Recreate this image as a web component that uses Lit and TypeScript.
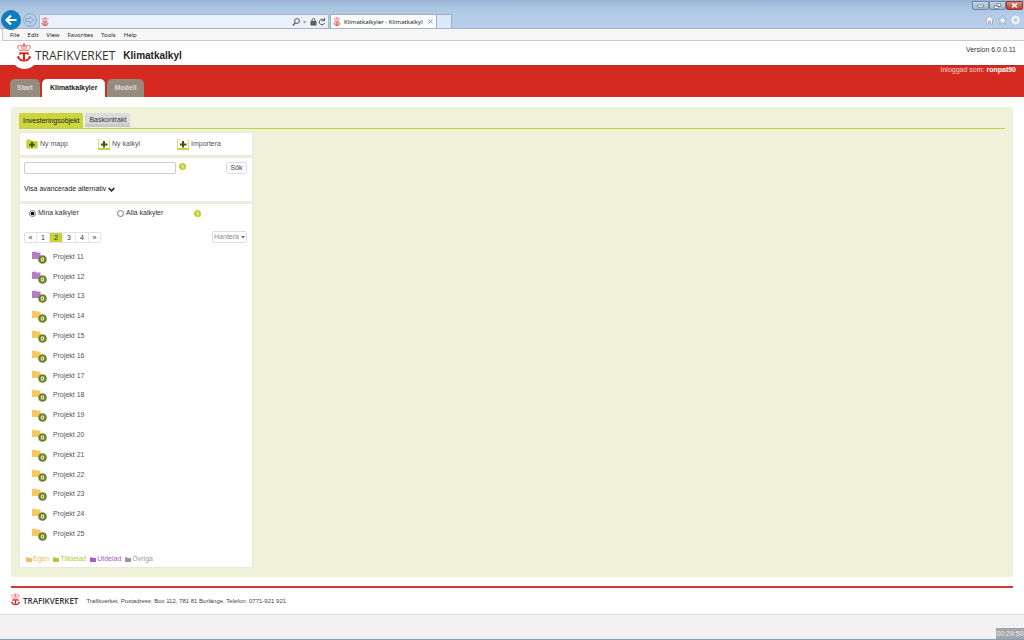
import { LitElement, html, css, svg } from "lit";
import { customElement, property, state } from "lit/decorators.js";
import { classMap } from "lit/directives/class-map.js";

const crest = html`<svg class="crest" viewBox="0 0 30 40" aria-hidden="true">
  <g fill="none" stroke="#e0564f" stroke-width="2">
    <circle cx="15" cy="2.8" r="1.8" />
    <path d="M15 4V13M5 14C-2 7 4 2 9 6C10.500 8 10.500 11 10.500 13M25 14C32 7 26 2 21 6C19.500 8 19.500 11 19.500 13M10 6C11 3.500 14 4.500 15 7C16 4.500 19 3.500 20 6" />
    <path d="M5 16Q15 13 25 16" />
  </g>
  <path fill="#d9291f" d="M5 19.500H25V25.500H22.500V23.500H17.300V36H12.700V23.500H7.500V25.500H5Z" />
  <path fill="none" stroke="#d9291f" stroke-width="4" d="M2.500 29C4 34.500 8 37.500 15 37.500S26 34.500 27.500 29" />
  <path fill="#d9291f" d="M0 31L2 26.500L7 30.500ZM30 31L28 26.500L23 30.500Z" />
</svg>`;

const folder = svg`<path d="M0 1.500Q0 .5 1 .5H4.500L5.500 2H11Q12 2 12 3V9Q12 10 11 10H1Q0 10 0 9Z" />`;

@customElement("folder-row")
export class FolderRow extends LitElement {
  @property() name = "";
  @property() kind = "own";

  static styles = css`
    :host { display: block; }
    a { display: flex; align-items: center; gap: 6px; color: #555; text-decoration: none; }
    .icon { width: 15px; height: 14px; display: block; }
    .own { fill: #f6c860; }
    .shared { fill: #b57cc8; }
    .badge { fill: #6e7f2c; }
    .zero { fill: none; stroke: #dfe5a8; stroke-width: 1.3; }
  `;

  render() {
    return html`<a href="#">
      <svg class="icon" viewBox="0 0 15 14" aria-hidden="true">
        <path class=${this.kind} d="M0 2L3.500 1.500L4.500 2.500L8.500 2.500V9H0Z" />
        <circle class="badge" cx="10.500" cy="9.500" r="4.300" />
        <ellipse class="zero" cx="10.500" cy="9.500" rx="1.200" ry="1.700" />
      </svg>
      <span>${this.name}</span>
    </a>`;
  }
}

@customElement("app-root")
export class AppRoot extends LitElement {
  @state() private page = "2";
  @state() private scope = "mina";

  static styles = css`
    :host {
      display: flex; flex-direction: column; min-height: 100vh; box-sizing: border-box;
      font: 7px/10px "Liberation Sans", Arial, sans-serif; color: #333; background: #fff;
    }
    * { box-sizing: border-box; }
    svg { display: block; flex: none; }
    button, input { font: inherit; margin: 0; }
    button { cursor: pointer; padding: 0; }
    a { text-decoration: none; color: inherit; }
    ul { list-style: none; margin: 0; padding: 0; }

    .chrome {
      position: relative; display: flex; align-items: flex-end; height: 29px; padding-left: 1px;
      background: linear-gradient(#98b4d5, #a9c3e1 25%, #b5cde9 60%, #b7cfe9);
      font-family: "Noto Sans", sans-serif; font-size: 6px; border-bottom: 1px solid #a3b3c5;
    }
    .nav { background: none; border: 0; }
    .back { width: 20px; height: 20px; margin-bottom: -2px; }
    .forward { width: 14px; height: 14px; margin: 0 2px 1px; }
    .address {
      display: flex; align-items: center; width: 290px; height: 14px; padding: 0 2px 0 1px; gap: 3px;
      background: #e9f1fa; border: 1px solid #a6b9cf; border-bottom: 0;
    }
    .address input { flex: 1; min-width: 0; border: 0; background: none; outline: 0; }
    .crest { width: 8px; height: 9px; }
    .browser-tab {
      display: flex; align-items: center; gap: 3px; height: 14px; width: 107px; margin-left: 1px;
      padding: 0 3px 0 2px; background: #fcfdff; border: 1px solid #9bacc2; border-bottom: 0; color: #222;
    }
    .browser-tab span { flex: 1; white-space: nowrap; }
    .new-tab { width: 15px; height: 14px; background: #dce9f8; border: 1px solid #9bacc2; border-width: 1px 1px 0 0; }
    .window { position: absolute; top: 1px; right: 1px; display: flex; }
    .window button {
      display: grid; place-items: center; width: 17px; height: 9px; background: linear-gradient(#c8d6e6, #9fb4cb);
      border: 1px solid #7189a5; border-radius: 0 0 2px 2px;
    }
    .window .close { background: linear-gradient(#dd8d7e, #c23b25); border-color: #8c3a36; }
    .tools { margin-left: auto; display: flex; gap: 4px; padding: 0 4px 3px 0; }

    .menu {
      display: flex; gap: 8px; height: 12px; margin-left: 2px; padding-left: 7px; align-items: center;
      background: #f6f6f6; border: solid #c8c8c8; border-width: 0 0 1px 1px;
      font-family: "Noto Sans", sans-serif; font-size: 6px; color: #222;
    }

    .top { position: relative; display: flex; align-items: center; height: 24px; padding: 5px 8px 0 17px; }
    .bump {
      position: absolute; left: 11px; top: 1px; width: 27px; height: 27px; background: #fff; border-radius: 50%;
    }
    .top .crest { position: relative; width: 14px; height: 19px; margin-top: -6px; }
    .brand { position: relative; font: 500 12px/14px "Open Sans", sans-serif; color: #333; margin: 0 8px 0 4px; }
    h1 { margin: 0; font-size: 10px; line-height: 14px; color: #222; }
    .version { margin-left: auto; align-self: flex-start; margin-top: -1px; }
    .band {
      display: flex; align-items: flex-end; justify-content: space-between; height: 32px;
      padding: 0 8px 0 10px; background: #d42a1f; border-top: 1px solid #b12d25; color: #f5d6d3;
    }
    .user { align-self: flex-start; line-height: 8px; }
    .user b { color: #fff; }
    .tabs { display: flex; gap: 2px; }
    .tabs a {
      height: 18px; line-height: 18px; padding: 0 7px; border-radius: 5px 5px 0 0; background: #958b7f;
      color: #dedbd6; font-weight: bold;
    }
    .tabs .active { padding: 0 8px; background: #fff; color: #222; }

    .panel { flex: 1; margin: 10px 11px 9px; padding: 6px 8px 8px; border-radius: 3px; background: #eff2d8; }
    .subtabs { display: flex; gap: 2px; height: 16px; border-bottom: 1px solid #c3d146; }
    .subtabs a { height: 15px; line-height: 15px; padding: 0 4px; border-radius: 2px 2px 0 0; color: #333; }
    .subtabs .active { background: #cbd63e; color: #222; }
    .subtabs .other { height: 14px; line-height: 14px; background: linear-gradient(#dcdcdc 60%, #c2c2c2); }
    .side { width: 234px; margin-top: 3px; display: grid; gap: 1px; }
    .card { background: #fff; border: 1px solid #e9e9e0; }
    .actions { display: flex; align-items: center; height: 24px; padding-left: 6px; }
    .actions a { display: flex; align-items: center; gap: 2px; color: #555; }
    .actions a:nth-child(1) { width: 72px; }
    .actions a:nth-child(2) { width: 79px; }
    .search { padding: 4px 5px 6px 4px; height: 45px; }
    .line { display: flex; align-items: center; }
    .search input { width: 152px; height: 12px; border: 1px solid #ccc; border-radius: 2px; padding: 0 3px; }
    .info { width: 7px; height: 7px; margin: 0 0 3px 3px; }
    .plain { height: 12px; background: #fff; border: 1px solid #ddd; border-radius: 2px; color: #444; line-height: 10px; }
    .find { width: 21px; margin-left: auto; }
    .more { display: flex; align-items: center; gap: 2px; margin-top: 10px; background: none; border: 0; color: #222; }
    .list { padding: 4px 5px 3px 4px; }
    .scope label { display: flex; align-items: center; gap: 2px; color: #333; }
    .scope label:nth-child(1) { width: 88px; padding-left: 5px; }
    .scope label:nth-child(2) { width: 82px; padding-left: 5px; }
    .scope .info { margin: 0; }
    input[type="radio"] {
      appearance: none; width: 7px; height: 7px; border: 1px solid #777; border-radius: 50%; background: #fff;
    }
    input[type="radio"]:checked { background: radial-gradient(#111 45%, #fff 60%); }
    .pager { margin-top: 13px; justify-content: space-between; }
    .pages { display: flex; border: 1px solid #e2e2e2; border-radius: 2px; }
    .pages button { display: block; width: 13px; height: 9px; line-height: 9px; border: 0; border-right: 1px solid #e8e8e8; background: #fff; color: #333; }
    .pages li:first-child button { width: 12px; }
    .pages li:last-child button { border-right: 0; width: 11px; }
    .pages .on { background: #c6d237; }
    .manage { display: flex; align-items: center; justify-content: center; gap: 2px; width: 35px; color: #888; }
    .rows { display: grid; grid-auto-rows: 1fr; align-items: center; min-height: 297px; margin-top: 4px; padding-left: 8px; }
    .legend { display: flex; gap: 4px; margin-top: 10px; padding-left: 2px; }
    .legend li { display: flex; align-items: center; gap: 1px; }
    .legend svg { width: 6px; height: 5px; fill: currentColor; }
    .egen { color: #f5bd63; } .tilldelad { color: #b5c938; } .utdelad { color: #a85cc0; } .ovriga { color: #999; }

    footer {
      display: flex; align-items: center; height: 28px; margin: 0 11px; border-top: 2px solid #cf3b34;
      font-size: 6px; color: #444;
    }
    footer .crest { width: 9px; height: 13px; margin-top: -3px; }
    footer .brand { font-size: 8px; line-height: 12px; font-weight: 600; margin: 0 8px 0 3px; }
    .status {
      display: flex; justify-content: flex-end; align-items: flex-end; height: 26px; background: #f3f1f1;
      border-top: 1px solid #ddd; border-bottom: 1px solid #7f9fbd;
    }
    .clock { width: 28px; height: 11px; line-height: 11px; text-align: center; background: #a3a6aa; color: #eee; }
  `;

  private info = html`<svg class="info" viewBox="0 0 14 14" role="img" aria-label="Info">
    <circle cx="7" cy="7" r="7" fill="#bfcd2e" /><path d="M5.500 6H8V11M7 2.500V4.500" stroke="#f8fae0" stroke-width="2" fill="none" />
  </svg>`;

  private sheet = html`<svg width="12" height="12" viewBox="0 0 12 12" aria-hidden="true">
    <path d="M2.500 1.500H.5V11.500M11.500 1.500V11.500" fill="none" stroke="#d5de6e" />
    <path d="M0 11H12" stroke="#c6d23e" stroke-width="2" />
    <path d="M6 3V9.500M3 6.500H9.500" stroke="#48521a" stroke-width="2" />
  </svg>`;

  private projects = Array.from({ length: 15 }, (_, i) => ({ name: `Projekt ${i + 11}`, kind: i < 3 ? "shared" : "own" }));

  render() {
    return html`
      <div class="chrome">
        <button class="nav back" aria-label="Back"><svg width="20" height="20" viewBox="0 0 20 20">
          <circle cx="10" cy="10" r="9.500" fill="#087fbd" stroke="#3d719d" /><path d="M15.500 10H6M10 5.500L5.500 10L10 14.500" fill="none" stroke="#fff" stroke-width="2.200" />
        </svg></button>
        <button class="nav forward" aria-label="Forward"><svg width="14" height="14" viewBox="0 0 14 14">
          <circle cx="7" cy="7" r="6.300" fill="#b9d0e8" stroke="#8aa6c6" /><path d="M3 5.500H7V3.500L11 7L7 10.500V8.500H3Z" fill="none" stroke="#8aa6c6" />
        </svg></button>
        <div class="address">
          ${crest}
          <input type="text" aria-label="Address" />
          <svg width="34" height="10" viewBox="0 0 34 10" fill="none" stroke="#555">
            <circle cx="5" cy="4" r="2.400" /><path d="M3.300 5.700L1 8.500" stroke-width="1.300" />
            <path d="M11 4.500H14L12.500 6Z" fill="#555" stroke="none" />
            <path d="M19 4.500H24V8H19Z" fill="#666" /><path d="M20 4.500V2.500Q21.500 .5 23 2.500V4.500" />
            <path d="M31.700 3A2.700 2.700 0 1 0 32.500 6M32.500 1V3.700H29.800" />
          </svg>
        </div>
        <div class="browser-tab">${crest}<span>Klimatkalkyler - Klimatkalkyl</span>
          <svg width="5" height="5" viewBox="0 0 5 5"><path d="M.5 .5L4.500 4.500M4.500 .5L.5 4.500" stroke="#888" /></svg>
        </div>
        <div class="new-tab"></div>
        <div class="tools">
          <svg width="35" height="10" viewBox="0 0 35 10" fill="#f8fbff" stroke="#8297b0" stroke-width=".6">
            <path d="M.5 5L4.500 1L8.500 5H7.500V9H5.500V6H3.500V9H1.500V5Z" />
            <path d="M17.500 .7L18.700 3.800L22 4L19.400 6L20.300 9.300L17.500 7.400L14.700 9.300L15.600 6L13 4L16.300 3.800Z" />
            <circle cx="30.500" cy="5" r="3" fill="none" stroke="#f8fbff" stroke-width="1.500" />
            <path d="M30.500 .5V2M30.500 8V9.500M26 5H27.500M33.500 5H35M27.300 1.800L28.500 3M32.500 7L33.700 8.200M33.700 1.800L32.500 3M28.500 7L27.300 8.200" stroke="#f8fbff" stroke-width="1.200" />
          </svg>
        </div>
        <div class="window">
          <button aria-label="Minimize"><svg width="7" height="5" viewBox="0 0 7 5"><path d="M.5 2H6.500V4H.5Z" fill="#fff" stroke="#66788c" stroke-width=".7" /></svg></button>
          <button aria-label="Restore"><svg width="7" height="6" viewBox="0 0 7 6"><path d="M2.500 .5H6.500V3.500H2.500ZM.5 2.500H4.500V5.500H.5Z" fill="#fff" stroke="#66788c" stroke-width=".7" /></svg></button>
          <button class="close" aria-label="Close"><svg width="7" height="5" viewBox="0 0 7 5"><path d="M1 .5L6 4.500M6 .5L1 4.500" stroke="#fff" stroke-width="1.500" /></svg></button>
        </div>
      </div>
      <nav class="menu">${["File", "Edit", "View", "Favorites", "Tools", "Help"].map((m) => html`<a href="#">${m}</a>`)}</nav>

      <header>
        <div class="top">
          <div class="bump"></div>${crest}
          <span class="brand">TRAFIKVERKET</span>
          <h1>Klimatkalkyl</h1>
          <span class="version">Version 6.0.0.11</span>
        </div>
        <div class="band">
          <nav class="tabs"><a href="#">Start</a><a href="#" class="active">Klimatkalkyler</a><a href="#">Modell</a></nav>
          <span class="user">Inloggad som: <b>ronpat90</b></span>
        </div>
      </header>

      <main class="panel">
        <nav class="subtabs"><a href="#" class="active">Investeringsobjekt</a><a href="#" class="other">Baskontrakt</a></nav>
        <div class="side">
          <div class="card actions">
            <a href="#"><svg width="12" height="10" viewBox="0 0 12 10.500" fill="#c4d034">${folder}<path d="M6 3V9M3 6H9" stroke="#48521a" stroke-width="2" /></svg>Ny mapp</a>
            <a href="#">${this.sheet}Ny kalkyl</a>
            <a href="#">${this.sheet}Importera</a>
          </div>
          <div class="card search">
            <div class="line">
              <input type="text" aria-label="Sök kalkyl" />${this.info}
              <button class="plain find">Sök</button>
            </div>
            <button class="more">Visa avancerade alternativ
              <svg width="7" height="5" viewBox="0 0 7 5"><path d="M.7 1L3.500 3.800L6.300 1" fill="none" stroke="#222" stroke-width="1.700" /></svg>
            </button>
          </div>
          <div class="card list">
            <div class="line scope">
              ${[["mina", "Mina kalkyler"], ["alla", "Alla kalkyler"]].map(
                ([id, text]) => html`<label><input type="radio" name="scope" .checked=${this.scope === id} @change=${() => (this.scope = id)} />${text}</label>`
              )}
              ${this.info}
            </div>
            <div class="line pager">
              <ul class="pages">
                ${["«", "1", "2", "3", "4", "»"].map(
                  (p) => html`<li><button class=${classMap({ on: p === this.page })} @click=${() => (this.page = p)}>${p}</button></li>`
                )}
              </ul>
              <button class="plain manage">Hantera <svg width="4" height="3" viewBox="0 0 4 3"><path d="M0 0H4L2 2.500Z" fill="#666" /></svg></button>
            </div>
            <div class="rows">${this.projects.map((p) => html`<folder-row name=${p.name} kind=${p.kind}></folder-row>`)}</div>
            <ul class="legend">
              ${[["egen", "Egen"], ["tilldelad", "Tilldelad"], ["utdelad", "Utdelad"], ["ovriga", "Övriga"]].map(
                ([cls, text]) => html`<li class=${cls}><svg viewBox="0 0 12 10">${folder}</svg>${text}</li>`
              )}
            </ul>
          </div>
        </div>
      </main>

      <footer>${crest}<span class="brand">TRAFIKVERKET</span><span>Trafikverket, Postadress: Box 112, 781 81 Borlänge, Telefon: 0771-921 921</span></footer>
      <div class="status"><span class="clock">00:29:50</span></div>
    `;
  }
}
